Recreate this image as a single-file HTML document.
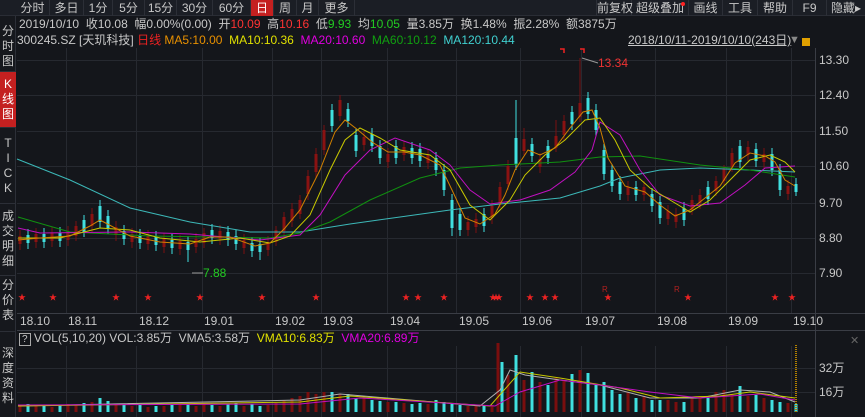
<!DOCTYPE html>
<html><head><meta charset="utf-8">
<style>
*{margin:0;padding:0;box-sizing:border-box}
body{width:865px;height:417px;background:#14161b;overflow:hidden;position:relative;font-family:"Liberation Sans","Noto Sans CJK SC",sans-serif;color:#c8c8c8;font-size:12px}
.abs{position:absolute;white-space:nowrap}
#tabs{left:0;top:0;width:865px;height:16px;background:#1b1e25;border-bottom:1px solid #2a2d35}
.tab{position:absolute;top:0;height:16px;line-height:16px;text-align:center;font-size:12px;color:#c8c8c8;border-right:1px solid #2c2f37}
#side{left:0;top:16px;width:16px;height:401px;background:#16181d;border-right:1px solid #2c2f37}
.sv{position:absolute;left:0;width:16px;text-align:center;font-size:12px;line-height:15px;color:#c8c8c8;border-bottom:1px solid #2c2f37}
svg{position:absolute;left:0;top:0}
svg text{font-family:"Liberation Sans","Noto Sans CJK SC",sans-serif;font-size:12px;fill:#c8c8c8}
svg text.st{fill:#e22;font-size:8px}
</style></head><body>
<svg width="865" height="417">
<g stroke="#262930" stroke-width="1">
<path d="M17 60.5H815M17 95.5H815M17 131.5H815M17 166.5H815M17 203.5H815M17 238.5H815M17 273.5H815M17 368.5H815M17 392.5H815"/>
<path d="M66.5 48V313M136.5 48V313M202.5 48V313M272.5 48V313M321.5 48V313M387.5 48V313M456.5 48V313M520.5 48V313M581.5 48V313M655.5 48V313M726.5 48V313M791.5 48V313M66.5 346V417M136.5 346V417M202.5 346V417M272.5 346V417M321.5 346V417M387.5 346V417M456.5 346V417M520.5 346V417M581.5 346V417M655.5 346V417M726.5 346V417M791.5 346V417"/>
</g>
<path d="M17 313.5H865M17 330.5H865M815.5 48V417" stroke="#3a3d45"/>
<text x="819" y="64">13.30</text><text x="819" y="99">12.40</text><text x="819" y="135">11.50</text><text x="819" y="170">10.60</text><text x="819" y="207">9.70</text><text x="819" y="242">8.80</text><text x="819" y="277">7.90</text>
<text x="819" y="372">32万</text><text x="819" y="396">16万</text>
<text x="20" y="325">18.10</text><text x="68" y="325">18.11</text><text x="139" y="325">18.12</text><text x="204" y="325">19.01</text><text x="275" y="325">19.02</text><text x="323" y="325">19.03</text><text x="390" y="325">19.04</text><text x="459" y="325">19.05</text><text x="522" y="325">19.06</text><text x="585" y="325">19.07</text><text x="657" y="325">19.08</text><text x="728" y="325">19.09</text><text x="793" y="325">19.10</text>
<text x="850" y="344" style="fill:#666;font-size:11px">✕</text>
<text class="st" x="18" y="300">★</text><text class="st" x="49" y="300">★</text><text class="st" x="112" y="300">★</text><text class="st" x="144" y="300">★</text><text class="st" x="196" y="300">★</text><text class="st" x="258" y="300">★</text><text class="st" x="312" y="300">★</text><text class="st" x="402" y="300">★</text><text class="st" x="414" y="300">★</text><text class="st" x="440" y="300">★</text><text class="st" x="489" y="300">★</text><text class="st" x="492" y="300">★</text><text class="st" x="495" y="300">★</text><text class="st" x="526" y="300">★</text><text class="st" x="541" y="300">★</text><text class="st" x="551" y="300">★</text><text class="st" x="604" y="300">★</text><text class="st" x="684" y="300">★</text><text class="st" x="771" y="300">★</text><text class="st" x="788" y="300">★</text>
<text class="st" x="602" y="292" style="fill:#b02020">R</text><text class="st" x="674" y="292" style="fill:#b02020">R</text>
<g fill="none" stroke-width="1">
<path stroke="#7a1010" d="M20 230V250M36 228V248M52 227V247M68 226V246M76 221V241M92 208V232M116 221V241M132 228V248M148 230V250M164 233V253M180 235V255M196 233V253M204 228V248M220 225V245M244 234V254M268 236V256M276 226V246M284 212V236M292 203V227M300 195V219M308 170V200M316 148V178M324 125V155M340 95V121M364 131V151M388 148V168M404 141V161M428 149V169M468 216V236M476 213V233M492 200V224M500 182V208M508 160V190M524 128V155M540 153V173M556 120V152M564 115V141M580 58V122M628 181V201M644 181V201M668 205V225M676 208V228M692 195V215M700 189V209M716 176V196M724 165V185M732 148V172M748 141V161M764 148V168M788 180V200"/>
<path stroke="#8a1212" stroke-width="3" d="M20 236V244M36 234V242M52 233V241M68 232V240M76 226V236M92 214V226M116 227V235M132 234V242M148 236V244M164 239V247M180 241V249M196 239V247M204 233V243M220 231V239M244 240V248M268 242V250M276 230V242M284 217V231M292 209V221M300 200V214M308 176V194M316 154V172M324 130V150M340 100V116M364 137V145M388 154V162M404 147V155M428 155V163M468 222V230M476 219V227M492 206V218M500 187V203M508 166V184M524 139V151M540 159V167M556 136V148M564 121V135M580 103V117M628 187V195M644 187V195M668 211V219M676 214V222M692 200V210M700 195V203M716 181V191M724 169V181M732 153V167M748 147V155M764 154V162M788 186V194"/>
<path stroke="#40e0e0" d="M28 229V249M44 228V248M60 227V247M84 215V237M100 200V228M108 210V234M124 225V245M140 229V249M156 231V251M172 234V254M188 236V262M212 224V244M228 226V246M236 230V250M252 237V257M260 238V260M332 104V132M348 103V127M356 129V157M372 128V152M380 140V164M396 140V164M412 142V164M420 143V167M436 152V176M444 164V196M452 194V236M460 208V236M484 208V232M516 100V170M532 138V162M548 140V164M572 106V130M588 92V120M596 104V136M604 144V180M612 164V192M620 176V200M636 181V201M652 188V212M660 196V224M684 202V226M708 181V205M740 140V168M756 143V167M772 148V176M780 164V196M796 178V196"/>
<path stroke="#40e0e0" stroke-width="3" d="M28 235V243M44 234V242M60 233V241M84 220V232M100 206V222M108 216V228M124 231V239M140 235V243M156 237V245M172 240V248M188 242V250M212 230V238M228 232V240M236 236V244M252 243V251M260 244V252M332 110V126M348 109V121M356 135V151M372 134V146M380 146V158M396 146V158M412 148V158M420 149V161M436 158V170M444 170V190M452 200V228M460 214V230M484 214V226M516 138V164M532 144V156M548 146V158M572 112V124M588 98V114M596 110V130M604 150V174M612 170V186M620 182V194M636 187V195M652 194V206M660 202V218M684 208V220M708 187V199M740 146V162M756 149V161M772 154V170M780 170V190M796 184V192"/>
<polyline stroke="#3cb8b8" points="17,159 70,180 130,208 190,222 250,232 300,232 350,224 400,217 450,210 500,204 560,198 600,186 620,178 660,170 700,168 750,170 795,172"/>
<polyline stroke="#109010" points="18,217 70,232 150,236 270,238 300,233 330,222 370,200 420,178 460,168 500,165 560,162 600,157 640,156 700,165 750,170 795,177"/>
<polyline stroke="#c010c0" points="18,228 40,233 130,232 190,234 260,240 300,235 320,215 345,175 370,150 395,138 430,150 450,165 470,190 490,204 520,200 550,190 575,172 592,150 600,122 620,135 640,170 660,195 690,206 720,203 745,185 765,168 795,166"/>
<polyline stroke="#c8c800" points="18,238 60,238 100,228 130,230 160,238 200,242 240,238 270,243 290,236 310,215 330,170 345,140 360,128 380,138 400,150 430,155 450,170 470,205 490,220 510,200 525,175 545,155 565,140 585,120 600,118 615,140 630,170 650,188 670,200 690,212 710,200 730,180 750,160 770,155 785,162 795,172"/>
<polyline stroke="#d08000" points="18,240 40,238 70,236 90,226 100,220 115,228 130,236 160,242 190,244 210,237 230,237 255,246 270,243 285,228 300,210 320,170 335,132 345,120 358,130 372,142 388,152 404,152 420,155 440,165 452,190 465,218 480,224 495,214 505,195 515,170 528,150 540,155 555,148 570,128 583,112 592,110 600,128 608,158 625,186 645,192 660,205 675,216 690,210 705,198 720,186 735,163 750,153 765,156 775,162 785,180 795,186"/>
<path stroke="#7a0e0e" stroke-width="3" d="M20 405V412M36 406V412M52 407V412M68 404V412M76 405V412M92 402V412M116 404V412M132 406V412M148 407V412M164 406V412M180 405V412M196 406V412M204 404V412M220 406V412M244 406V412M268 405V412M276 403V412M284 400V412M292 398V412M300 396V412M308 392V412M316 394V412M324 392V412M340 394V412M364 398V412M388 402V412M404 403V412M428 404V412M468 406V412M476 406V412M492 405V412M498 343V412M508 375V412M524 380V412M540 382V412M556 378V412M564 380V412M580 370V412M628 392V412M644 396V412M668 400V412M676 402V412M692 398V412M700 396V412M716 392V412M724 390V412M732 394V412M748 396V412M764 398V412M788 403V412"/>
<path stroke="#40e0e0" stroke-width="3" d="M28 404V412M44 406V412M60 405V412M84 403V412M100 398V412M108 401V412M124 404V412M140 405V412M156 406V412M172 405V412M188 404V412M212 405V412M228 404V412M236 403V412M252 404V412M260 406V412M332 392V412M348 394V412M356 398V412M372 400V412M380 401V412M396 402V412M412 404V412M420 403V412M436 400V412M444 402V412M452 404V412M460 405V412M484 405V412M502 362V412M516 355V412M532 372V412M548 385V412M572 374V412M588 373V412M596 385V412M604 382V412M612 390V412M620 394V412M636 398V412M652 400V412M660 400V412M684 402V412M708 398V412M740 386V412M756 395V412M772 400V412M780 402V412M796 404V412"/>
<polyline stroke="#b0b0b0" points="18,406 300,400 340,394 480,406 500,390 510,370 525,375 560,380 600,385 650,398 700,398 740,390 770,392 795,402"/>
<polyline stroke="#c8c800" points="18,406 300,402 350,396 490,406 520,372 560,378 620,388 660,398 720,396 750,392 795,398"/>
<polyline stroke="#c010c0" points="18,405 300,404 360,398 495,406 520,392 560,380 600,385 650,392 700,398 760,394 795,400"/>
<path stroke="#999" d="M582 58L598 63M192 273H203"/>
<path stroke="#b08000" stroke-dasharray="1 1" stroke-width="2" d="M796 345V412"/>
</g>
<text x="598" y="67" style="fill:#e33">13.34</text>
<text x="203" y="277" style="fill:#2c2">7.88</text>
<path d="M560 49h4v4M580 49h4v4" stroke="#e22" fill="none" stroke-width="1.5"/>
</svg>
<div id="tabs" class="abs">
<div class="tab" style="left:16px;width:34px">分时</div>
<div class="tab" style="left:50px;width:34px">多日</div>
<div class="tab" style="left:84px;width:29px">1分</div>
<div class="tab" style="left:113px;width:32px">5分</div>
<div class="tab" style="left:145px;width:32px">15分</div>
<div class="tab" style="left:177px;width:36px">30分</div>
<div class="tab" style="left:213px;width:38px">60分</div>
<div class="tab" style="left:251px;width:23px;background:#c42020;color:#fff">日</div>
<div class="tab" style="left:274px;width:23px">周</div>
<div class="tab" style="left:297px;width:22px">月</div>
<div class="tab" style="left:319px;width:36px">更多</div>
<div class="tab" style="left:596px;width:36px;border-left:1px solid #2c2f37">前复权</div>
<div class="tab" style="left:632px;width:57px">超级叠加<span style="position:absolute;right:3px;top:2px;width:4px;height:4px;border-radius:2px;background:#f22"></span></div>
<div class="tab" style="left:689px;width:34px">画线</div>
<div class="tab" style="left:723px;width:35px">工具</div>
<div class="tab" style="left:758px;width:35px">帮助</div>
<div class="tab" style="left:793px;width:34px">F9</div>
<div class="tab" style="left:827px;width:38px;border-right:none">隐藏▸</div>
</div>
<div id="side" class="abs">
<div class="sv" style="top:4px;height:52px;padding-top:4px">分<br>时<br>图</div>
<div class="sv" style="top:56px;height:56px;padding-top:5px;background:#c42020;color:#fff">K<br>线<br>图</div>
<div class="sv" style="top:112px;height:76px;padding-top:8px">T<br>I<br>C<br>K</div>
<div class="sv" style="top:188px;height:72px;padding-top:5px">成<br>交<br>明<br>细</div>
<div class="sv" style="top:260px;height:56px;padding-top:2px">分<br>价<br>表</div>
<div class="sv" style="top:316px;height:85px;padding-top:14px;border-bottom:none">深<br>度<br>资<br>料</div>
</div>
<div class="abs" style="left:19px;top:17px;font-size:12px;line-height:15px">2019/10/10&nbsp; 收10.08 &nbsp;幅0.00%(0.00)&nbsp; 开<span style="color:#f33">10.09</span>&nbsp; 高<span style="color:#f33">10.16</span>&nbsp; 低<span style="color:#2c2">9.93</span>&nbsp; 均<span style="color:#2c2">10.05</span>&nbsp; 量3.85万&nbsp; 换1.48%&nbsp; 振2.28%&nbsp; 额3875万</div>
<div class="abs" style="left:17px;top:33px;font-size:12px;line-height:15px">300245.SZ [天玑科技] <span style="color:#e22">日线</span> <span style="color:#e89000">MA5:10.00</span> &nbsp;<span style="color:#e0e000">MA10:10.36</span> &nbsp;<span style="color:#e000e0">MA20:10.60</span> &nbsp;<span style="color:#10a010">MA60:10.12</span> &nbsp;<span style="color:#40d0d0">MA120:10.44</span></div>
<div class="abs" style="left:628px;top:33px;font-size:12px;line-height:15px;text-decoration:underline">2018/10/11-2019/10/10(243日)</div>
<div class="abs" style="left:789px;top:34px;color:#888;font-size:11px">▼</div>
<div class="abs" style="left:802px;top:38px;width:8px;height:8px;background:#e0a000"></div>
<div class="abs" style="left:19px;top:331px;font-size:12px;line-height:15px"><span style="border:1px solid #aaa;font-size:10px;padding:0 2px">?</span> VOL(5,10,20) VOL:3.85万&nbsp; VMA5:3.58万&nbsp; <span style="color:#e0e000">VMA10:6.83万</span>&nbsp; <span style="color:#e000e0">VMA20:6.89万</span></div>
</body></html>
